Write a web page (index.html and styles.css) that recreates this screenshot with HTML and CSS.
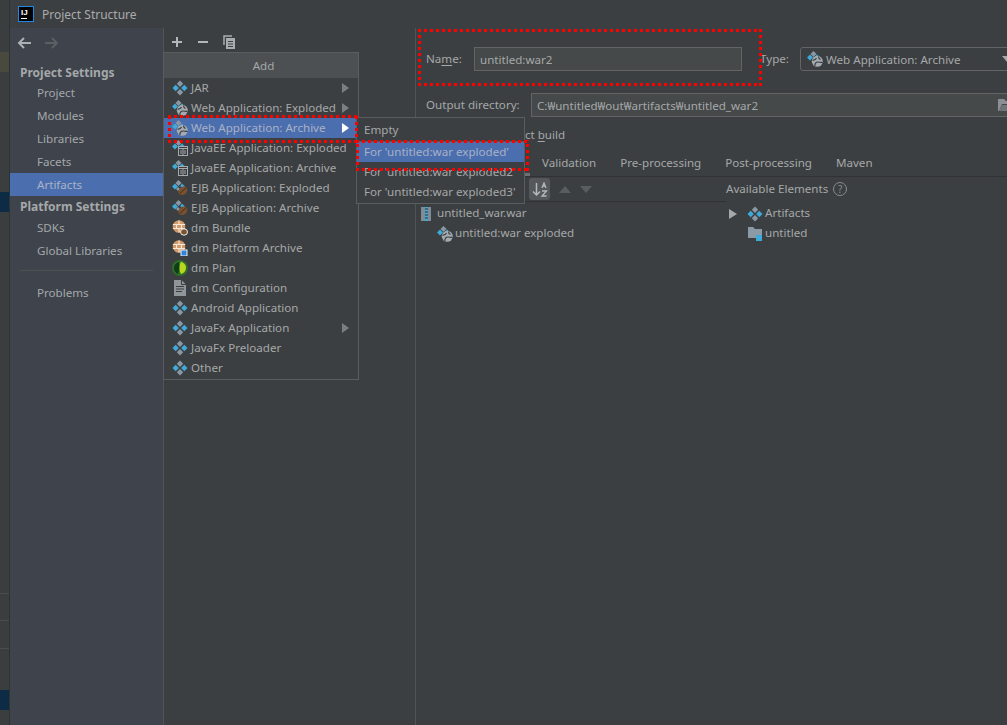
FILE: index.html
```html
<!DOCTYPE html>
<html lang="en">
<head>
<meta charset="utf-8">
<title>Project Structure</title>
<link rel="stylesheet" href="styles.css">
</head>
<body>
<svg class="defs" width="0" height="0" aria-hidden="true">
  <symbol id="artifact" viewBox="0 0 16 16">
    <path fill="#8a98a6" d="M8 0.500l3.200 3.200L8 6.900 4.800 3.700z"/>
    <path fill="#3fa9d8" d="M3.700 4.800l3.200 3.200-3.200 3.200L0.500 8z"/>
    <path fill="#3fa9d8" d="M12.300 4.800l3.200 3.200-3.200 3.200L9.100 8z"/>
    <path fill="#8a98a6" d="M8 9.100l3.200 3.200L8 15.500l-3.200-3.200z"/>
  </symbol>
  <symbol id="web" viewBox="0 0 16 16">
    <path fill="#8a98a6" d="M6.500 0l3 3-3 3-3-3z"/>
    <path fill="#3fa9d8" d="M3 3.500l3 3-3 3-3-3z"/>
    <path fill="#3fa9d8" d="M10 3.500l2 2-2 1-2-1z"/>
    <circle cx="10.300" cy="10.300" r="5.500" fill="#a3abb0"/>
    <path fill="none" stroke="#3c3f41" stroke-width="1.200" d="M5.500 9c2 0.500 3 0 4-2M8 15c-0.500-2.500 1-4 3-4s3 1 4.500 0M11.500 5.500c0 1.500 1 2.500 2 3"/>
  </symbol>
  <symbol id="javaee" viewBox="0 0 16 16">
    <path fill="#8a98a6" d="M6.500 0l3 3-3 3-3-3z"/>
    <path fill="#3fa9d8" d="M3 3.500l3 3-3 3-3-3z"/>
    <path fill="#3fa9d8" d="M10 3.500l2.500 2.500h-5z"/>
    <rect x="6.500" y="6.500" width="9" height="9" fill="#3c3f41" stroke="#a4aaae"/>
    <path stroke="#a4aaae" fill="none" d="M6.500 8.500h9M11 8.500v7M8 11h2M12 11h2M8 13h2M12 13h2"/>
  </symbol>
  <symbol id="ejb" viewBox="0 0 16 16">
    <path fill="#8a98a6" d="M6.500 0l3 3-3 3-3-3z"/>
    <path fill="#3fa9d8" d="M3 3.500l3 3-3 3-3-3z"/>
    <path fill="#3fa9d8" d="M10 3.500l3 3-2 1-3-1z"/>
    <path fill="#8a98a6" d="M6 7l2 2-2 2-2-2z"/>
    <ellipse cx="10.800" cy="10.800" rx="4.800" ry="3.800" fill="#7a5230" transform="rotate(-40 10.800 10.800)"/>
    <path stroke="#3f2a18" fill="none" d="M7.800 13.500l6-5.500"/>
  </symbol>
  <symbol id="ball" viewBox="0 0 16 16">
    <circle cx="7" cy="6.500" r="6.300" fill="#d29a6a"/>
    <path stroke="#f5e8da" stroke-width="1.100" fill="none" d="M0.800 4.500h12.400M0.800 8.500h12.400M7 0.500v4M4.500 4.500v4M9.500 4.500v4M7 8.500v4"/>
  </symbol>
  <symbol id="plan" viewBox="0 0 16 16">
    <circle cx="8" cy="8" r="8" fill="#2c6e2a"/>
    <path fill="#b8d820" d="M9 1.500c4 1.500 5.500 4.500 5 7-0.500 3-2.500 5-5 5.500-2-3-2-9 0-12.500z"/>
    <path fill="#0f3d18" d="M2 8c0-3 2-5 4.500-6 1 3 1 8-0.500 12C3.500 13 2 11 2 8z"/>
  </symbol>
  <symbol id="doc" viewBox="0 0 16 16">
    <path fill="#8f9599" d="M2 0h7.500L14 4.500V16H2z"/>
    <path stroke="#3c3f41" fill="none" d="M4 6.500h8M4 9h8M4 11.500h6M9.500 0v4.500H14"/>
  </symbol>
</svg>

<div class="backdrop">
  <div class="strip-tan"></div>
  <div class="strip-navy"></div>
  <div class="strip-line line-a"></div>
  <div class="strip-line line-b"></div>
  <div class="strip-line line-c"></div>
  <div class="strip-navy navy-low"></div>
</div>

<div class="dialog">
  <header class="titlebar">
    <span class="app-logo"><span class="logo-text">IJ</span><span class="logo-bar"></span></span>
    <span class="title">Project Structure</span>
  </header>
  <div class="content">
    <nav class="sidebar">
      <div class="nav-arrows">
        <svg class="arrow" width="16" height="14" viewBox="0 0 16 14"><path fill="none" stroke="#adb0b2" stroke-width="2" d="M14 7H2M7 2L2 7l5 5"/></svg>
        <svg class="arrow" width="16" height="14" viewBox="0 0 16 14"><path fill="none" stroke="#5c5f62" stroke-width="2" d="M2 7h12M9 2l5 5-5 5"/></svg>
      </div>
      <div class="nav-heading first">Project Settings</div>
      <div class="nav-item">Project</div>
      <div class="nav-item">Modules</div>
      <div class="nav-item">Libraries</div>
      <div class="nav-item">Facets</div>
      <div class="nav-item selected">Artifacts</div>
      <div class="nav-heading">Platform Settings</div>
      <div class="nav-item">SDKs</div>
      <div class="nav-item">Global Libraries</div>
      <div class="nav-sep"></div>
      <div class="nav-item">Problems</div>
    </nav>

    <section class="middle">
      <div class="toolbar">
        <svg width="12" height="12" viewBox="0 0 12 12"><path stroke="#b4b7b9" stroke-width="2" d="M6 1v10M1 6h10"/></svg>
        <svg width="12" height="12" viewBox="0 0 12 12"><path stroke="#b4b7b9" stroke-width="2" d="M1 6h10"/></svg>
        <svg width="13" height="14" viewBox="0 0 13 14"><path fill="none" stroke="#a9acae" stroke-width="1.500" d="M1 10V1h8"/><path fill="#a9acae" d="M3 3h9v11H3z"/><path stroke="#3c3f41" d="M5 6.500h5M5 9h5M5 11.500h5"/></svg>
      </div>
    </section>

    <main class="panel">
      <div class="form-row">
        <label class="label name-label">Na<u>m</u>e:</label>
        <div class="input name-input">untitled:war2</div>
        <label class="label type-label">Type:</label>
        <div class="input select"><svg class="ico" width="16" height="16"><use href="#web"/></svg><span>Web Application: Archive</span><span class="caret"></span></div>
      </div>
      <div class="form-row dir-row">
        <label class="label dir-label">Output directory:</label>
        <div class="input dir-input"><span class="dir-path">C:₩untitled₩out₩artifacts₩untitled_war2</span>
          <svg class="folder" width="16" height="14" viewBox="0 0 16 14"><path fill="#8c9094" d="M0 1h6l2 2h6v3H4L1 13H0z"/><path fill="#6f7477" d="M4 7h12l-3 6H1z"/></svg>
        </div>
      </div>
      <div class="check-row">Include in project <u>b</u>uild</div>
      <div class="tabs">
        <span class="tab tab-active">Output Layout</span>
        <span class="tab">Validation</span>
        <span class="tab">Pre-processing</span>
        <span class="tab">Post-processing</span>
        <span class="tab">Maven</span>
      </div>
      <div class="split">
        <div class="split-left">
          <div class="tree-tools">
            <span class="sort-btn">
              <svg width="16" height="15" viewBox="0 0 16 15"><path fill="none" stroke="#b6b9bb" stroke-width="1.500" d="M4.500 1v12M1 9.500l3.500 3.500L8 9.500"/><path fill="none" stroke="#b6b9bb" stroke-width="1.300" d="M10 6l2-5 2 5M10.800 4.200h2.400M10 9h4.500l-4.500 5h4.500"/></svg>
            </span>
            <span class="tri-up"></span>
            <span class="tri-down"></span>
          </div>
          <div class="tree-row">
            <svg class="ico-small" width="10" height="14" viewBox="0 0 10 14"><rect x="0" y="0" width="10" height="14" fill="#7f8b95"/><rect x="4" y="0" width="3" height="14" fill="#3fa9d8"/><path stroke="#2f3234" d="M4 2h3M4 5h3M4 8h3M4 11h3"/></svg>
            <span>untitled_war.war</span>
          </div>
          <div class="tree-row indent">
            <svg class="ico" width="16" height="16"><use href="#web"/></svg>
            <span>untitled:war exploded</span>
          </div>
        </div>
        <div class="split-right">
          <div class="avail-title">Available Elements <span class="help">?</span></div>
          <div class="tree-row">
            <span class="tree-tri"></span>
            <svg class="ico" width="16" height="16"><use href="#artifact"/></svg>
            <span>Artifacts</span>
          </div>
          <div class="tree-row no-tri">
            <svg class="ico" width="16" height="16" viewBox="0 0 16 16"><path fill="#8c9aa6" d="M1 1h5l2 2h7v9H1z"/><rect x="9" y="9" width="6" height="6" fill="#3fa9d8"/></svg>
            <span>untitled</span>
          </div>
        </div>
      </div>
    </main>
  </div>
</div>

<div class="popup add-menu">
  <div class="popup-head">Add</div>
  <div class="menu-item"><svg class="ico" width="16" height="16"><use href="#artifact"/></svg><span>JAR</span><i class="sub"></i></div>
  <div class="menu-item"><svg class="ico" width="16" height="16"><use href="#web"/></svg><span>Web Application: Exploded</span><i class="sub"></i></div>
  <div class="menu-item active"><svg class="ico" width="16" height="16"><use href="#web"/></svg><span>Web Application: Archive</span><i class="sub"></i></div>
  <div class="menu-item"><svg class="ico" width="16" height="16"><use href="#javaee"/></svg><span>JavaEE Application: Exploded</span></div>
  <div class="menu-item"><svg class="ico" width="16" height="16"><use href="#javaee"/></svg><span>JavaEE Application: Archive</span></div>
  <div class="menu-item"><svg class="ico" width="16" height="16"><use href="#ejb"/></svg><span>EJB Application: Exploded</span></div>
  <div class="menu-item"><svg class="ico" width="16" height="16"><use href="#ejb"/></svg><span>EJB Application: Archive</span></div>
  <div class="menu-item"><svg class="ico" width="16" height="16" viewBox="0 0 16 16"><use href="#ball"/><ellipse cx="12" cy="12" rx="3.500" ry="3.200" fill="#7a5230" stroke="#eee"/></svg><span>dm Bundle</span></div>
  <div class="menu-item"><svg class="ico" width="16" height="16" viewBox="0 0 16 16"><use href="#ball"/><rect x="9" y="10" width="6" height="6" fill="#2f86d8" stroke="#eee"/></svg><span>dm Platform Archive</span></div>
  <div class="menu-item"><svg class="ico" width="16" height="16"><use href="#plan"/></svg><span>dm Plan</span></div>
  <div class="menu-item"><svg class="ico" width="16" height="16"><use href="#doc"/></svg><span>dm Configuration</span></div>
  <div class="menu-item"><svg class="ico" width="16" height="16"><use href="#artifact"/></svg><span>Android Application</span></div>
  <div class="menu-item"><svg class="ico" width="16" height="16"><use href="#artifact"/></svg><span>JavaFx Application</span><i class="sub"></i></div>
  <div class="menu-item"><svg class="ico" width="16" height="16"><use href="#artifact"/></svg><span>JavaFx Preloader</span></div>
  <div class="menu-item"><svg class="ico" width="16" height="16"><use href="#artifact"/></svg><span>Other</span></div>
</div>

<div class="popup sub-menu">
  <div class="sub-item sub-empty">Empty</div>
  <div class="sub-item active">For 'untitled:war exploded'</div>
  <div class="sub-item">For 'untitled:war exploded2'</div>
  <div class="sub-item">For 'untitled:war exploded3'</div>
</div>

<div class="mark mark-menu"></div>
<div class="mark mark-sub"></div>
<div class="mark mark-name"></div>
</body>
</html>
```
FILE: styles.css
```css
* { box-sizing: border-box; }
html, body { margin: 0; padding: 0; }
body {
  position: relative;
  display: flex;
  width: 1007px;
  height: 725px;
  overflow: hidden;
  background: #3c3f41;
  color: #a5a8a9;
  font: 11.6px/16px "Noto Sans", "Open Sans", sans-serif;
}
u { text-underline-offset: 2px; }
.defs { position: absolute; }
.ico, .ico-small { flex: none; }

.backdrop {
  flex: 0 0 10px;
  display: flex;
  flex-direction: column;
  background: #3a3e3f;
  border-right: 1px solid #2f3234;
}
.strip-tan { height: 20px; margin-top: 52px; background: #49493d; }
.strip-navy { height: 20px; margin-top: 120px; background: #0e2b45; }
.strip-line { height: 1px; background: #4b4c4c; }
.line-a { margin-top: 381px; }
.line-b { margin-top: 26px; }
.line-c { margin-top: 27px; }
.navy-low { margin-top: 41px; }

.dialog { flex: 1; display: flex; flex-direction: column; min-width: 0; }

.titlebar {
  flex: 0 0 28px;
  display: flex;
  align-items: center;
  padding-left: 8px;
  background: #3c3f41;
}
.app-logo {
  position: relative;
  width: 16px;
  height: 16px;
  background: #000;
  border: 1px solid #1e88e5;
  display: block;
}
.logo-text {
  display: block;
  font: bold 8px/8px "Liberation Sans", sans-serif;
  color: #fff;
  padding: 2px 0 0 2px;
}
.logo-bar { display: block; width: 6px; height: 1px; margin: 1px 0 0 2px; background: #fff; }
.title { margin-left: 8px; padding-top: 2px; color: #a9abad; font-size: 12px; }

.content { flex: 1; display: flex; min-height: 0; }

.sidebar {
  flex: 0 0 154px;
  background: #3e434c;
  border-right: 1px solid #515355;
}
.nav-arrows { display: flex; gap: 10px; padding: 8px 0 0 7px; height: 34px; }
.nav-heading {
  height: 20px;
  line-height: 22px;
  padding-left: 10px;
  font-size: 12px;
  font-weight: 700;
  color: #a5a8a9;
}
.nav-heading.first { height: 19px; }
.nav-item { height: 23px; line-height: 24px; padding-left: 27px; }
.nav-item.selected { background: #4b6eaf; color: #aab4c8; }
.nav-sep { height: 1px; margin: 8px 10px 10px; background: #4d4f51; }

.middle {
  flex: 0 0 252px;
  border-right: 1px solid #515355;
  background: #3c3f41;
}
.toolbar { display: flex; align-items: center; gap: 14px; padding: 7px 0 0 7px; }

.panel { flex: 1; min-width: 0; padding: 19px 0 0 10px; overflow: hidden; }
.form-row { display: flex; align-items: center; height: 24px; }
.form-row > * { flex: none; }
.dir-row { margin-top: 22px; }
.label { color: #a5a8a9; }
.name-label { width: 48px; }
.input {
  height: 24px;
  line-height: 23px;
  padding: 0 5px;
  background: #45494a;
  border: 1px solid #646464;
  color: #a5a8a9;
}
.name-input { width: 268px; }
.type-label { margin-left: 18px; width: 40px; }
.select {
  width: 240px;
  display: flex;
  align-items: center;
  gap: 3px;
  padding-left: 6px;
  background: #3c3f41;
  border-radius: 3px;
}
.caret {
  margin-left: 38px;
  border: 5px solid transparent;
  border-top: 6px solid #a5a8a9;
  border-bottom: 0;
}
.dir-label { width: 105px; }
.dir-input { width: 480px; display: flex; align-items: center; }
.dir-path { white-space: nowrap; }
.folder { margin-left: 240px; flex: none; }
.check-row { margin: 8px 0 0 14px; height: 20px; line-height: 20px; }

.tabs { display: flex; height: 24px; margin: 8px 0 0 -10px; padding-left: 10px; border-bottom: 1px solid #323232; }
.tab { padding: 0 12px; line-height: 20px; white-space: nowrap; }
.tab-active { width: 104px; flex: none; box-shadow: inset 0 -3px 0 #6e7174; }

.split { display: flex; margin-left: -10px; }
.split-left { flex: 0 0 310px; }
.split-right { flex: 1; }
.tree-tools {
  display: flex;
  align-items: center;
  gap: 8px;
  height: 25px;
  padding-left: 113px;
  border-bottom: 1px solid #323232;
}
.sort-btn {
  width: 21px;
  height: 22px;
  display: flex;
  align-items: center;
  justify-content: center;
  border-radius: 3px;
  background: #55585a;
}
.tri-up, .tri-down { width: 0; height: 0; border-left: 6px solid transparent; border-right: 6px solid transparent; margin-left: 1px; }
.tri-up { border-bottom: 7px solid #5a5d5f; }
.tri-down { border-top: 7px solid #5a5d5f; }

.tree-row { display: flex; align-items: center; height: 20px; padding-left: 5px; gap: 6px; }
.tree-row span { padding-bottom: 2px; }
.tree-row:nth-child(2) { margin-top: 2px; }
.indent { padding-left: 21px; gap: 2px; }
.avail-title { height: 25px; padding-bottom: 1px; line-height: 20px; display: flex; align-items: center; gap: 5px; }
.help {
  width: 14px;
  height: 14px;
  border: 1px solid #8a8d8f;
  border-radius: 50%;
  font-size: 10px;
  line-height: 12px;
  text-align: center;
  color: #8a8d8f;
}
.split-right .tree-row { padding-left: 3px; gap: 2px; }
.tree-row .tree-tri { width: 0; height: 0; padding: 0; margin-right: 8px; border-left: 8px solid #a5a8a9; border-top: 5px solid transparent; border-bottom: 5px solid transparent; }
.split-right .no-tri { padding-left: 21px; }

.popup { position: absolute; background: #3c3f41; border: 1px solid #5a5d5f; }
.add-menu { left: 163px; top: 52px; width: 196px; height: 328px; }
.popup-head { height: 25px; line-height: 25px; padding-left: 5px; text-align: center; background: #4c5052; }
.menu-item { position: relative; display: flex; align-items: center; height: 20px; padding-left: 8px; gap: 3px; white-space: nowrap; }
.menu-item.active, .sub-item.active { background: #4b6eaf; color: #a9b1c4; }
.sub {
  position: absolute;
  right: 9px;
  top: 5px;
  border-left: 7px solid #7c7f81;
  border-top: 5px solid transparent;
  border-bottom: 5px solid transparent;
}
.active .sub { border-left-color: #fff; }

.sub-menu { left: 356px; top: 117px; width: 169px; height: 87px; }
.sub-item { height: 20px; line-height: 20px; padding-left: 7px; white-space: nowrap; }
.sub-empty { height: 24px; line-height: 23px; border-bottom: 1px solid #55585a; }

.mark {
  position: absolute;
  background:
    repeating-linear-gradient(90deg, #f00 0 3px, transparent 3px 6px) left top / 100% 3px no-repeat,
    repeating-linear-gradient(90deg, #f00 0 3px, transparent 3px 6px) left bottom / 100% 3px no-repeat,
    repeating-linear-gradient(0deg, #f00 0 3px, transparent 3px 6px) left top / 3px 100% no-repeat,
    repeating-linear-gradient(0deg, #f00 0 3px, transparent 3px 6px) right top / 3px 100% no-repeat;
}
.mark-menu { left: 168px; top: 115px; width: 190px; height: 28px; }
.mark-sub { left: 356px; top: 140px; width: 173px; height: 31px; }
.mark-name { left: 418px; top: 29px; width: 344px; height: 57px; }
```
